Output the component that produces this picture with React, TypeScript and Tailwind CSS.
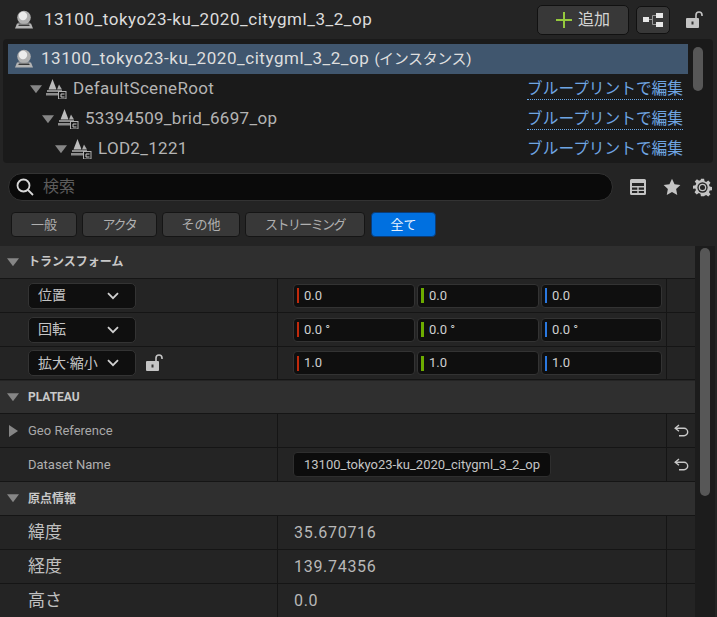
import React from "react";

const FONT = "font-['Roboto','Noto_Sans_CJK_JP',sans-serif]";

function Sphere() {
  return (
    <svg width="22" height="22" viewBox="0 0 22 22">
      <circle cx="11" cy="8.5" r="6.8" fill="#b0b0b0" />
      <circle cx="10" cy="7" r="4.2" fill="#ececec" />
      <path d="M5 13a7.500 7.500 0 0 0 12 0v1.500H5z" fill="#7c7c7c" />
      <path d="M4 14.500h14l2 5H2z" fill="#b4b4b4" />
      <path d="M6 15.500h10l.8 1.600H5.200z" fill="#3a3a3a" />
    </svg>
  );
}

function Mesh() {
  return (
    <svg width="21" height="20" viewBox="0 0 21 20">
      <path d="M6.500 0l4 10.500h-8z" fill="#bdbdbd" />
      <path d="M13 5.500l3 5h-5z" fill="#adadad" />
      <path d="M1 11h15v2H1zM0 14h12v2.500H0z" fill="#8c8c8c" />
      <rect x="12.500" y="12.500" width="7.500" height="7.500" fill="#1a1a1a" stroke="#b0b0b0" />
      <path d="M18.500 15h-3.500v3h3.500" fill="none" stroke="#c8c8c8" />
    </svg>
  );
}

function TriDown({ size = 12 }: { size?: number }) {
  return (
    <svg width={size} height={size * 0.7} viewBox="0 0 12 8">
      <path d="M0 0h12L6 8z" fill="#868686" />
    </svg>
  );
}

function Lock() {
  return (
    <svg width="19" height="18" viewBox="0 0 19 18">
      <path d="M11 7V4a3 3 0 0 1 6 0v1" fill="none" stroke="#c4c4c4" strokeWidth="1.600" />
      <rect x="1" y="7" width="13" height="10" rx="1" fill="#c4c4c4" />
      <rect x="6.500" y="10.500" width="2" height="3" fill="#333" />
    </svg>
  );
}

function Undo() {
  return (
    <svg width="15" height="13" viewBox="0 0 15 13" fill="none" stroke="#c8c8c8" strokeWidth="1.400">
      <path d="M5 1L1.200 4.300 5 7.300" />
      <path d="M1.500 4.300h8.500a3.600 3.600 0 0 1 0 7.400H5" />
    </svg>
  );
}

function Chevron() {
  return (
    <svg width="12" height="8" viewBox="0 0 12 8" fill="none" stroke="#d0d0d0" strokeWidth="1.800">
      <path d="M1 1.200l5 5 5-5" />
    </svg>
  );
}

function TreeRow({ indent, label, underline = true }: { indent: string; label: string; underline?: boolean }) {
  return (
    <div className="flex h-[30px] items-center pr-[5px]">
      <div className={`flex items-center ${indent}`}>
        <TriDown size={12} />
        <span className="ml-[4px] flex"><Mesh /></span>
        <span className="ml-[6px] text-[17px] tracking-[0.3px] text-[#b4b4b4]">{label}</span>
      </div>
      <span
        className={`ml-auto border-b text-[15.700px] leading-[20px] text-[#6fa5e3] ${
          underline ? "border-dotted border-[#6aa8e8]" : "border-transparent"
        }`}
      >
        ブループリントで編集
      </span>
    </div>
  );
}

function FilterButton({ label, w, active }: { label: string; w: string; active?: boolean }) {
  return (
    <div
      className={`flex h-[25px] items-center justify-center rounded-[4px] border text-[13px] ${w} ${
        active ? "border-[#0a3c78] bg-[#0070e0] text-[#e8f2ff]" : "border-[#151515] bg-[#383838] text-[#b0b0b0]"
      }`}
    >
      {label}
    </div>
  );
}

function SectionHeader({ label, h = "h-[33px]" }: { label: string; h?: string }) {
  return (
    <div className={`flex ${h} items-center border-b border-[#151515] bg-[#2f2f2f] pl-[7px]`}>
      <TriDown size={12} />
      <span className="ml-[9px] text-[12px] font-bold text-[#c8c8c8]">{label}</span>
    </div>
  );
}

function Row({
  left,
  mid,
  right,
  h = "h-[34px]",
}: {
  left: React.ReactNode;
  mid?: React.ReactNode;
  right?: React.ReactNode;
  h?: string;
}) {
  return (
    <div className={`flex ${h} border-b border-[#151515] bg-[#242424]`}>
      <div className="flex w-[278px] shrink-0 items-center border-r border-[#151515]">{left}</div>
      <div className="flex min-w-0 flex-1 items-center border-r border-[#151515] pl-[15px]">{mid}</div>
      <div className="flex w-[28px] shrink-0 items-center justify-center">{right}</div>
    </div>
  );
}

function AxisField({ color, bar, value, w }: { color: string; bar: string; value: string; w: string }) {
  return (
    <div className={`flex h-[24px] items-center rounded-[4px] border border-[#333] bg-[#0f0f0f] pl-[3px] ${w}`}>
      <span className={`h-[15px] ${bar} ${color}`} />
      <span className="ml-[5px] text-[13px] text-[#d0d0d0]">{value}</span>
    </div>
  );
}

function Vector({ values }: { values: string[] }) {
  return (
    <div className="flex gap-[2px]">
      <AxisField color="bg-[#c02a0c]" bar="w-[2px]" value={values[0]} w="w-[122px]" />
      <AxisField color="bg-[#6cab00]" bar="w-[3px]" value={values[1]} w="w-[122px]" />
      <AxisField color="bg-[#2a78e0]" bar="w-[2px]" value={values[2]} w="w-[121px]" />
    </div>
  );
}

function Select({ label }: { label: string }) {
  return (
    <div className="ml-[28px] flex h-[26px] w-[108px] items-center justify-between rounded-[5px] border border-[#333] bg-[#0f0f0f] pl-[9px] pr-[16px] text-[14px] text-[#c4c4c4]">
      <span className="whitespace-nowrap">{label}</span>
      <Chevron />
    </div>
  );
}

function Big({ text }: { text: string }) {
  return <span className="ml-[28px] text-[17px] text-[#c0c0c0]">{text}</span>;
}

function Num({ text }: { text: string }) {
  return <span className="ml-[1px] text-[16px] tracking-[0.7px] text-[#b8b8b8]">{text}</span>;
}

export default function App() {
  return (
    <div className={`relative h-[617px] w-[717px] overflow-hidden bg-[#242424] ${FONT}`}>
      {/* title bar */}
      <div className="flex h-[39px] items-center pl-[13px]">
        <Sphere />
        <span className="ml-[9px] text-[17px] tracking-[0.55px] text-[#dcdcdc]">13100_tokyo23-ku_2020_citygml_3_2_op</span>
        <div className="ml-auto mr-[7px] flex h-[30px] w-[92px] items-center justify-center gap-[6px] rounded-[5px] border border-[#111] bg-[#383838]">
          <svg width="16" height="16" viewBox="0 0 16 16">
            <path d="M7 0h2v7h7v2H9v7H7V9H0V7h7z" fill="#95c93d" />
          </svg>
          <span className="text-[16px] text-[#d4d4d4]">追加</span>
        </div>
        <div className="flex h-[28px] w-[34px] items-center justify-center rounded-[5px] border border-[#111] bg-[#383838]">
          <svg width="22" height="16" viewBox="0 0 22 16">
            <rect x="1" y="5" width="6" height="5" fill="#e8e8e8" />
            <rect x="14" y="1" width="7" height="5" fill="#e8e8e8" />
            <rect x="14" y="10" width="7" height="5" fill="#e8e8e8" />
            <path d="M7 7.500h3.500M14 3.500h-3.500v9H14" fill="none" stroke="#999" />
          </svg>
        </div>
        <span className="ml-[15px] mr-[13px] flex"><Lock /></span>
      </div>

      {/* component tree */}
      <div className="ml-[3px] mr-[4px] flex h-[124px] overflow-hidden rounded-[4px] bg-[#1a1a1a] pl-[5px] pr-[10px] pt-[5px]">
        <div className="min-w-0 flex-1">
          <div className="flex h-[30px] items-center bg-[#40566e] pl-[5px]">
            <Sphere />
            <span className="ml-[6px] text-[17px] tracking-[0.55px] text-[#dedede]">13100_tokyo23-ku_2020_citygml_3_2_op</span>
            <span className="ml-[5px] text-[15px] tracking-[-0.4px] text-[#dedede]">(インスタンス)</span>
          </div>
          <TreeRow indent="pl-[22px]" label="DefaultSceneRoot" />
          <TreeRow indent="pl-[34px]" label="53394509_brid_6697_op" />
          <TreeRow indent="pl-[47px]" label="LOD2_1221" underline={false} />
        </div>
        <div className="ml-[5px] mt-[3px] h-[44px] w-[10px] rounded-full bg-[#575757]" />
      </div>

      {/* search */}
      <div className="mt-[10px] flex items-center pl-[8px]">
        <div className="flex h-[28px] w-[605px] items-center rounded-full border border-[#333] bg-[#0a0a0a] pl-[6px]">
          <svg width="20" height="20" viewBox="0 0 20 20" fill="none" stroke="#d8d8d8" strokeWidth="1.800">
            <circle cx="8.500" cy="8.500" r="6" />
            <path d="M13 13l5 5" />
          </svg>
          <span className="ml-[8px] text-[16px] text-[#5c5c5c]">検索</span>
        </div>
        <svg width="18" height="18" viewBox="0 0 18 18" className="ml-[16px]">
          <path d="M1 2.500A1.500 1.500 0 0 1 2.500 1h13A1.500 1.500 0 0 1 17 2.500v13a1.500 1.500 0 0 1-1.500 1.500h-13A1.500 1.500 0 0 1 1 15.500z" fill="#c4c4c4" />
          <path d="M3 5h12v3H3zM3 9.500h5.300v2.200H3zM9.700 9.500H15v2.200H9.700zM3 13h5.300v2H3zM9.700 13H15v2H9.700z" fill="#242424" />
        </svg>
        <svg width="18" height="18" viewBox="0 0 24 24" className="ml-[16px]">
          <path d="M12 1l3.400 7.300 7.800 1-5.700 5.400 1.500 8L12 18.800l-7 3.900 1.500-8L.8 9.300l7.800-1z" fill="#c4c4c4" />
        </svg>
        <svg width="19" height="19" viewBox="0 0 24 24" className="ml-[12px]">
          <path
            d="M10 1h4l.6 3.200 2 .9L19.300 3.200l2.800 2.800-1.900 2.700.9 2 3.200.6v4l-3.200.6-.9 2 1.900 2.700-2.800 2.800-2.700-1.900-2 .9L14 23h-4l-.6-3.200-2-.9-2.700 1.900-2.800-2.800 1.900-2.700-.9-2L0 13.700v-4l3.200-.6.900-2L2.200 4.400 5 1.600l2.700 1.900 2-.9z"
            fill="#c4c4c4"
          />
          <circle cx="12" cy="12" r="6.500" fill="#242424" />
          <circle cx="12" cy="12" r="4" fill="none" stroke="#c4c4c4" strokeWidth="1.600" />
        </svg>
      </div>

      {/* filters */}
      <div className="mt-[11px] flex gap-[5px] pl-[11px]">
        <FilterButton label="一般" w="w-[66px]" />
        <FilterButton label="アクタ" w="w-[75px] tracking-[-1.200px]" />
        <FilterButton label="その他" w="w-[78px]" />
        <FilterButton label="ストリーミング" w="w-[120px] tracking-[-1.600px]" />
        <FilterButton label="全て" w="w-[65px] ml-[1px]" active />
      </div>

      {/* details */}
      <div className="mt-[9px] flex">
        <div className="w-[695px] shrink-0">
          <SectionHeader label="トランスフォーム" />
          <Row left={<Select label="位置" />} mid={<Vector values={["0.0", "0.0", "0.0"]} />} />
          <Row left={<Select label="回転" />} mid={<Vector values={["0.0 °", "0.0 °", "0.0 °"]} />} />
          <Row
            h="h-[33px]"
            left={
              <>
                <Select label="拡大·縮小" />
                <span className="ml-[9px] flex"><Lock /></span>
              </>
            }
            mid={<Vector values={["1.0", "1.0", "1.0"]} />}
          />
          <div className="h-[1px]" />
          <SectionHeader label="PLATEAU" />
          <Row
            left={
              <>
                <svg width="9" height="12" viewBox="0 0 9 12" className="ml-[9px]">
                  <path d="M0 0l9 6-9 6z" fill="#868686" />
                </svg>
                <span className="ml-[10px] text-[13px] text-[#a8a8a8]">Geo Reference</span>
              </>
            }
            right={<Undo />}
          />
          <Row
            left={<span className="ml-[28px] text-[13px] text-[#b0b0b0]">Dataset Name</span>}
            mid={
              <div className="flex h-[25px] w-[258px] items-center rounded-[4px] border border-[#2e2e2e] bg-[#0c0c0c] pl-[10px] text-[13px] text-[#c4c4c4]">
                13100_tokyo23-ku_2020_citygml_3_2_op
              </div>
            }
            right={<Undo />}
          />
          <SectionHeader label="原点情報" h="h-[34px]" />
          <Row left={<Big text="緯度" />} mid={<Num text="35.670716" />} />
          <Row left={<Big text="経度" />} mid={<Num text="139.74356" />} />
          <Row left={<Big text="高さ" />} mid={<Num text="0.0" />} />
        </div>
        <div className="h-[371px] w-[20px] bg-[#1c1c1c] pl-[5px] pt-[2px]">
          <div className="h-[248px] w-[10px] rounded-full bg-[#575757]" />
        </div>
      </div>
    </div>
  );
}
